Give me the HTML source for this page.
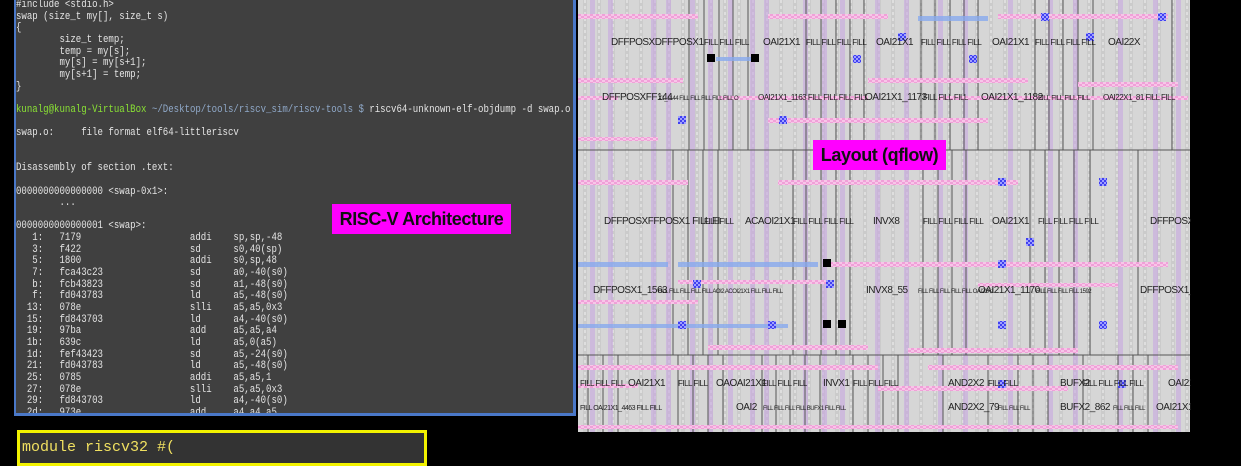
<!DOCTYPE html>
<html><head><meta charset="utf-8"><style>
body{margin:0;width:1241px;height:445px;background:#000;position:relative;overflow:hidden;font-family:"Liberation Sans",sans-serif}
#term{position:absolute;left:14px;top:0;width:557px;height:413px;background:#404040;border-right:3px solid #4a78c8;border-bottom:3px solid #4a78c8;border-left:2px solid #4a78c8;overflow:hidden}
pre{margin:0;position:absolute;left:0px;top:0px;font-family:"Liberation Mono",monospace;font-size:10.6px;line-height:11.65px;color:#e4e4e4;transform:scaleX(0.855);transform-origin:0 0}
.g{color:#8ae234}.b{color:#8fa8c8}
.lab{position:absolute;background:#ff00ff;color:#111;font-weight:bold;font-size:18px;letter-spacing:-0.4px;line-height:30px;text-align:center;white-space:nowrap}
#ybox{position:absolute;left:17px;top:430px;width:404px;height:30px;border:3px solid #f2f200;background:#333}
#ybox span{position:absolute;left:2px;top:6px;font-family:"Liberation Mono",monospace;font-size:15px;color:#f0e060}
#lay{position:absolute;left:578px;top:0}
</style></head><body>
<div id="term"><pre>#include &lt;stdio.h&gt;
swap (size_t my[], size_t s)
{
        size_t temp;
        temp = my[s];
        my[s] = my[s+1];
        my[s+1] = temp;
}

<span class="g">kunalg@kunalg-VirtualBox</span> <span class="b">~/Desktop/tools/riscv_sim/riscv-tools $</span> riscv64-unknown-elf-objdump -d swap.o

swap.o:     file format elf64-littleriscv


Disassembly of section .text:

0000000000000000 &lt;swap-0x1&gt;:
        ...

0000000000000001 &lt;swap&gt;:
   1:   7179                    addi    sp,sp,-48
   3:   f422                    sd      s0,40(sp)
   5:   1800                    addi    s0,sp,48
   7:   fca43c23                sd      a0,-40(s0)
   b:   fcb43823                sd      a1,-48(s0)
   f:   fd043783                ld      a5,-48(s0)
  13:   078e                    slli    a5,a5,0x3
  15:   fd843703                ld      a4,-40(s0)
  19:   97ba                    add     a5,a5,a4
  1b:   639c                    ld      a5,0(a5)
  1d:   fef43423                sd      a5,-24(s0)
  21:   fd043783                ld      a5,-48(s0)
  25:   0785                    addi    a5,a5,1
  27:   078e                    slli    a5,a5,0x3
  29:   fd843703                ld      a4,-40(s0)
  2d:   973e                    add     a4,a4,a5</pre></div>
<div class="lab" style="left:332px;top:204px;width:179px">RISC-V Architecture</div>
<div id="ybox"><span>module riscv32 #(</span></div>

<svg id="lay" width="613" height="434" viewBox="0 0 613 434" font-family="Liberation Sans, sans-serif">
<defs>
<pattern id="bg" width="14" height="6" patternUnits="userSpaceOnUse"><rect width="14" height="6" fill="#d6d6d6"/><rect x="5" width="4" height="6" fill="#cbcbcb"/><rect x="6" y="0" width="2" height="3" fill="#dedede"/></pattern>
<pattern id="pk" width="6" height="4" patternUnits="userSpaceOnUse"><rect width="6" height="4" fill="#f0a0d8"/><rect width="3" height="2" fill="#f7c6e8"/><rect x="3" y="2" width="3" height="2" fill="#f7c6e8"/></pattern>
<pattern id="bl" width="4" height="4" patternUnits="userSpaceOnUse"><rect width="4" height="4" fill="#4040f0"/><rect width="2" height="2" fill="#a0a0ff"/><rect x="2" y="2" width="2" height="2" fill="#a0a0ff"/></pattern>
</defs>
<rect width="612" height="432" fill="url(#bg)"/>
<g fill="#c8a8e0" opacity="0.6">
<rect x="12" width="5" height="432"/><rect x="30" width="5" height="432"/><rect x="73" width="5" height="432"/><rect x="88" width="5" height="432"/><rect x="112" width="5" height="432"/><rect x="130" width="5" height="432"/><rect x="150" width="5" height="432"/><rect x="172" width="5" height="432"/><rect x="186" width="5" height="432"/><rect x="225" width="5" height="432"/><rect x="244" width="5" height="432"/><rect x="262" width="5" height="432"/><rect x="297" width="5" height="432"/><rect x="326" width="5" height="432"/><rect x="360" width="5" height="432"/><rect x="385" width="5" height="432"/><rect x="430" width="5" height="432"/><rect x="470" width="5" height="432"/><rect x="495" width="5" height="432"/><rect x="540" width="5" height="432"/><rect x="575" width="5" height="432"/><rect x="598" width="5" height="432"/>
</g>
<g stroke="#555" stroke-width="1">
<line x1="0" y1="150" x2="612" y2="150"/><line x1="0" y1="355" x2="612" y2="355"/>
<line x1="111" y1="0" x2="111" y2="150"/><line x1="126" y1="0" x2="126" y2="150"/><line x1="141" y1="0" x2="141" y2="150"/><line x1="155" y1="0" x2="155" y2="150"/><line x1="170" y1="0" x2="170" y2="150"/><line x1="228" y1="0" x2="228" y2="150"/><line x1="243" y1="0" x2="243" y2="150"/><line x1="258" y1="0" x2="258" y2="150"/><line x1="272" y1="0" x2="272" y2="150"/><line x1="286" y1="0" x2="286" y2="150"/><line x1="343" y1="0" x2="343" y2="150"/><line x1="357" y1="0" x2="357" y2="150"/><line x1="372" y1="0" x2="372" y2="150"/><line x1="386" y1="0" x2="386" y2="150"/><line x1="400" y1="0" x2="400" y2="150"/><line x1="457" y1="0" x2="457" y2="150"/><line x1="471" y1="0" x2="471" y2="150"/><line x1="485" y1="0" x2="485" y2="150"/><line x1="500" y1="0" x2="500" y2="150"/><line x1="515" y1="0" x2="515" y2="150"/><line x1="594" y1="0" x2="594" y2="150"/>
<line x1="95" y1="150" x2="95" y2="355"/><line x1="110" y1="150" x2="110" y2="355"/><line x1="125" y1="150" x2="125" y2="355"/><line x1="140" y1="150" x2="140" y2="355"/><line x1="215" y1="150" x2="215" y2="355"/><line x1="228" y1="150" x2="228" y2="355"/><line x1="243" y1="150" x2="243" y2="355"/><line x1="258" y1="150" x2="258" y2="355"/><line x1="272" y1="150" x2="272" y2="355"/><line x1="345" y1="150" x2="345" y2="355"/><line x1="360" y1="150" x2="360" y2="355"/><line x1="374" y1="150" x2="374" y2="355"/><line x1="388" y1="150" x2="388" y2="355"/><line x1="452" y1="150" x2="452" y2="355"/><line x1="467" y1="150" x2="467" y2="355"/><line x1="481" y1="150" x2="481" y2="355"/><line x1="496" y1="150" x2="496" y2="355"/><line x1="512" y1="150" x2="512" y2="355"/><line x1="560" y1="150" x2="560" y2="355"/>
<line x1="10" y1="355" x2="10" y2="432"/><line x1="25" y1="355" x2="25" y2="432"/><line x1="40" y1="355" x2="40" y2="432"/><line x1="100" y1="355" x2="100" y2="432"/><line x1="115" y1="355" x2="115" y2="432"/><line x1="130" y1="355" x2="130" y2="432"/><line x1="145" y1="355" x2="145" y2="432"/><line x1="184" y1="355" x2="184" y2="432"/><line x1="198" y1="355" x2="198" y2="432"/><line x1="212" y1="355" x2="212" y2="432"/><line x1="227" y1="355" x2="227" y2="432"/><line x1="242" y1="355" x2="242" y2="432"/><line x1="275" y1="355" x2="275" y2="432"/><line x1="290" y1="355" x2="290" y2="432"/><line x1="305" y1="355" x2="305" y2="432"/><line x1="320" y1="355" x2="320" y2="432"/><line x1="365" y1="355" x2="365" y2="432"/><line x1="410" y1="355" x2="410" y2="432"/><line x1="440" y1="355" x2="440" y2="432"/><line x1="455" y1="355" x2="455" y2="432"/><line x1="470" y1="355" x2="470" y2="432"/><line x1="505" y1="355" x2="505" y2="432"/><line x1="540" y1="355" x2="540" y2="432"/><line x1="555" y1="355" x2="555" y2="432"/><line x1="570" y1="355" x2="570" y2="432"/>
</g>
<g fill="url(#pk)">
<rect x="0" y="14" width="120" height="5"/><rect x="190" y="14" width="120" height="5"/><rect x="420" y="14" width="170" height="5"/>
<rect x="0" y="78" width="105" height="5"/><rect x="290" y="78" width="160" height="5"/><rect x="500" y="82" width="100" height="5"/>
<rect x="0" y="96" width="40" height="4"/><rect x="140" y="96" width="150" height="4"/><rect x="360" y="96" width="250" height="4"/>
<rect x="190" y="118" width="220" height="5"/><rect x="0" y="137" width="80" height="4"/>
<rect x="0" y="180" width="110" height="5"/><rect x="200" y="180" width="240" height="5"/>
<rect x="250" y="262" width="340" height="5"/><rect x="100" y="280" width="150" height="4"/><rect x="400" y="283" width="140" height="4"/>
<rect x="0" y="300" width="120" height="4"/><rect x="130" y="345" width="160" height="5"/><rect x="330" y="348" width="170" height="5"/>
<rect x="0" y="365" width="300" height="5"/><rect x="350" y="365" width="250" height="5"/>
<rect x="0" y="384" width="60" height="4"/><rect x="300" y="386" width="190" height="5"/><rect x="0" y="425" width="600" height="4"/>
</g>
<g fill="#88aaee" opacity="0.8"><rect x="340" y="16" width="70" height="5"/><rect x="100" y="262" width="140" height="5"/><rect x="0" y="262" width="90" height="5"/><rect x="0" y="324" width="210" height="4"/><rect x="138" y="57" width="35" height="4"/></g>
<g fill="url(#bl)">
<rect x="275" y="55" width="8" height="8"/><rect x="320" y="33" width="8" height="8"/><rect x="391" y="55" width="8" height="8"/><rect x="463" y="13" width="8" height="8"/><rect x="580" y="13" width="8" height="8"/><rect x="508" y="33" width="8" height="8"/><rect x="100" y="116" width="8" height="8"/><rect x="201" y="116" width="8" height="8"/><rect x="420" y="178" width="8" height="8"/><rect x="521" y="178" width="8" height="8"/><rect x="448" y="238" width="8" height="8"/><rect x="420" y="260" width="8" height="8"/><rect x="248" y="280" width="8" height="8"/><rect x="115" y="280" width="8" height="8"/><rect x="100" y="321" width="8" height="8"/><rect x="190" y="321" width="8" height="8"/><rect x="420" y="321" width="8" height="8"/><rect x="521" y="321" width="8" height="8"/><rect x="420" y="380" width="8" height="8"/><rect x="540" y="380" width="8" height="8"/></g>
<g fill="#000"><rect x="129" y="54" width="8" height="8"/><rect x="173" y="54" width="8" height="8"/><rect x="245" y="259" width="8" height="8"/><rect x="245" y="320" width="8" height="8"/><rect x="260" y="320" width="8" height="8"/></g>
<g font-size="10" fill="#222" letter-spacing="-0.5">
<text x="33" y="45">DFFPOSXDFFPOSX1</text><text x="126" y="45" font-size="8">FILL FILL FILL</text><text x="185" y="45">OAI21X1</text><text x="228" y="45" font-size="8">FILL FILL FILL FILL</text><text x="298" y="45">OAI21X1</text><text x="343" y="45" font-size="8">FILL FILL FILL FILL</text><text x="414" y="45">OAI21X1</text><text x="457" y="45" font-size="8">FILL FILL FILL FILL</text><text x="530" y="45">OAI22X</text>
<text x="24" y="100">DFFPOSXFF144</text><text x="80" y="100" font-size="6">X1_1144 FILL FILL FILL FILL FILL O</text><text x="180" y="100" font-size="8">OAI21X1_1163 FILL FILL FILL FILL</text><text x="287" y="100">OAI21X1_1173</text><text x="345" y="100" font-size="8">FILL FILL FILL</text><text x="403" y="100">OAI21X1_1182</text><text x="460" y="100" font-size="7">FILL FILL FILL FILL</text><text x="525" y="100" font-size="8">OAI22X1_81 FILL FILL</text>
<text x="26" y="224">DFFPOSXFFPOSX1 FILL FI</text><text x="126" y="224" font-size="8">FILL FILL</text><text x="167" y="224">ACAOI21X1</text><text x="215" y="224" font-size="8">FILL FILL FILL FILL</text><text x="295" y="224">INVX8</text><text x="345" y="224" font-size="8">FILL FILL FILL FILL</text><text x="414" y="224">OAI21X1</text><text x="460" y="224" font-size="8">FILL FILL FILL FILL</text><text x="572" y="224">DFFPOSX</text>
<text x="15" y="293">DFFPOSX1_1563</text><text x="80" y="293" font-size="6">FILL FILL FILL FILL FILL AOI2 ACOI21X1 FILL FILL FILL</text><text x="288" y="293">INVX8_55</text><text x="340" y="293" font-size="6">FILL FILL FILL FILL FILL OAI21X1</text><text x="400" y="293">OAI21X1_1170</text><text x="458" y="293" font-size="6">FILL FILL FILL FILL 1592</text><text x="562" y="293">DFFPOSX1_</text>
<text x="2" y="386" font-size="8">FILL FILL FILL</text><text x="50" y="386">OAI21X1</text><text x="100" y="386" font-size="8">FILL FILL</text><text x="138" y="386">OAOAI21X1</text><text x="184" y="386" font-size="8">FILL FILL FILL</text><text x="245" y="386">INVX1</text><text x="275" y="386" font-size="8">FILL FILL FILL</text><text x="370" y="386">AND2X2</text><text x="410" y="386" font-size="8">FILL FILL</text><text x="482" y="386">BUFX2</text><text x="505" y="386" font-size="8">FILL FILL FILL FILL</text><text x="590" y="386">OAI21</text>
<text x="2" y="410" font-size="7">FILL OAI21X1_4463 FILL FILL</text><text x="158" y="410">OAI2</text><text x="185" y="410" font-size="6">FILL FILL FILL FILL BUFX1 FILL FILL</text><text x="370" y="410">AND2X2_79</text><text x="420" y="410" font-size="6">FILL FILL FILL</text><text x="482" y="410">BUFX2_862</text><text x="535" y="410" font-size="6">FILL FILL FILL</text><text x="578" y="410">OAI21X1</text>
</g>
</svg>
<div class="lab" style="left:813px;top:140px;width:133px">Layout (qflow)</div>
</body></html>
